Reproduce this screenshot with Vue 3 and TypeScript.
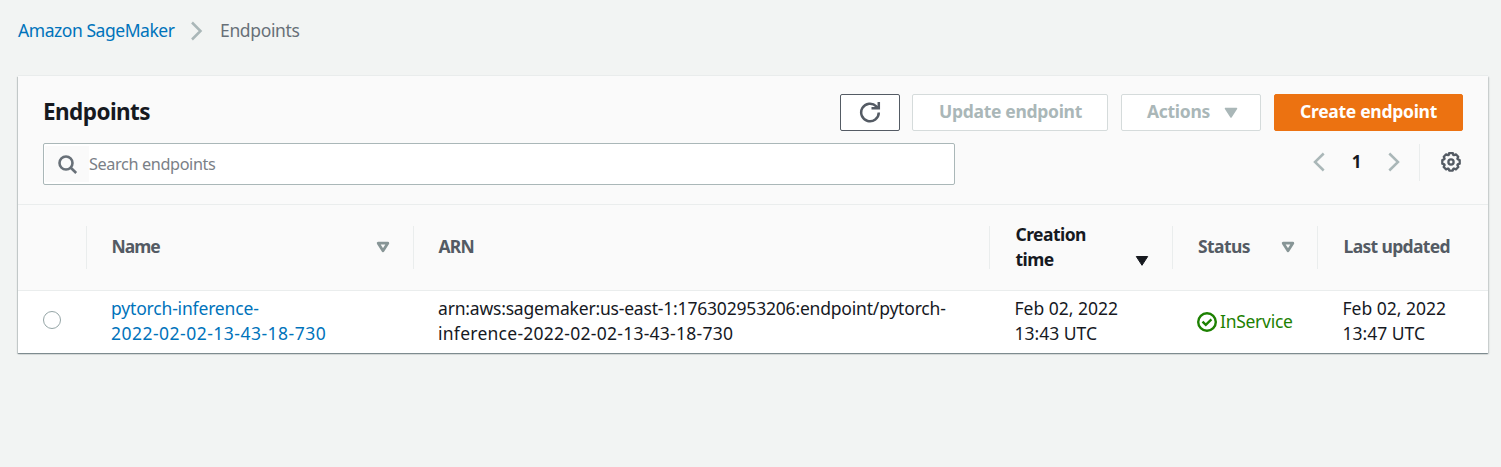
<script setup lang="ts">
interface Column {
  key: string
  lines: string[]
  sort?: 'none' | 'desc'
}

const columns: Column[] = [
  { key: 'name', lines: ['Name'], sort: 'none' },
  { key: 'arn', lines: ['ARN'] },
  { key: 'created', lines: ['Creation', 'time'], sort: 'desc' },
  { key: 'status', lines: ['Status'], sort: 'none' },
  { key: 'updated', lines: ['Last updated'] },
]
</script>

<template>
  <div class="page">
    <nav class="crumbs">
      <a class="link crumb-root">Amazon SageMaker</a>
      <svg class="crumb-sep" width="14" height="20" viewBox="0 0 14 20"><path d="M2 1.500 10.500 10 2 18.500" /></svg>
      <span class="crumb-here">Endpoints</span>
    </nav>

    <section class="card">
      <header class="head">
        <div class="title-row">
          <h2>Endpoints</h2>
          <div class="buttons">
            <button class="btn refresh" aria-label="Refresh">
              <svg width="22" height="22" viewBox="0 0 22 22">
                <path d="M19.800 11.500a8.800 8.800 0 1 1-2.500-6.200L19 7" />
                <path d="M19.800 1v6.200h-7.300" />
              </svg>
            </button>
            <button class="btn disabled update"><span>Update endpoint</span></button>
            <button class="btn disabled actions">
              <span>Actions</span>
              <svg width="14" height="12" viewBox="0 0 14 12"><path d="M1.500 1.500h11L7 10z" /></svg>
            </button>
            <button class="btn primary"><span>Create endpoint</span></button>
          </div>
        </div>
        <div class="filter-row">
          <div class="search">
            <div class="search-icon">
              <svg width="20" height="20" viewBox="0 0 20 20"><circle cx="8" cy="8" r="6.500" /><path d="m12.800 12.800 5.400 5.200" /></svg>
            </div>
            <div class="search-field"><span>Search endpoints</span></div>
          </div>
          <div class="pager">
            <svg class="arrow" width="12" height="20" viewBox="0 0 12 20"><path d="M10.700 1.500 2 10l8.700 8.500" /></svg>
            <b>1</b>
            <svg class="arrow" width="12" height="20" viewBox="0 0 12 20"><path d="M1.300 1.500 10 10l-8.700 8.500" /></svg>
            <i class="rule"></i>
            <svg class="gear" width="20" height="20" viewBox="0 0 20 20">
              <path d="M8.300 1h3.400l.7 2 .5.200 2-.9 2.300 2.400-.8 1.900.3.700 2 .8v3.600l-2 .7-.3.600.9 2-2.400 2.400-2-.9-.5.200-.7 2H8.300l-.7-2-.5-.2-2 .9L2.700 15l.9-2-.3-.600-2-.7V8.100l2-.8.300-.7-.8-1.900 2.300-2.400 2 .9.500-.2z" />
              <circle cx="10" cy="10" r="2.600" />
            </svg>
          </div>
        </div>
      </header>

      <div class="grid thead">
        <div class="th"></div>
        <div v-for="c in columns" :key="c.key" class="th" :class="[c.key, { sorted: c.sort === 'desc' }]">
          <div class="label">
            <div v-for="l in c.lines" :key="l"><span>{{ l }}</span></div>
          </div>
          <svg v-if="c.sort" class="sort" width="14" height="12" viewBox="0 0 14 12">
            <path v-if="c.sort === 'none'" class="hollow" d="M2.200 2.200h9.600L7 9.800z" />
            <path v-else class="solid" d="M1.300 1.500h11.400L7 10.300z" />
          </svg>
        </div>
      </div>

      <div class="grid row">
        <div class="td pick"><span class="radio"></span></div>
        <div class="td link"><div class="n1">pytorch-inference-</div><div class="n2">2022-02-02-13-43-18-730</div></div>
        <div class="td"><div class="a1">arn:aws:sagemaker:us-east-1:176302953206:endpoint/pytorch-</div><div class="a2">inference-2022-02-02-13-43-18-730</div></div>
        <div class="td date"><div>Feb 02, 2022</div><div>13:43 UTC</div></div>
        <div class="td ok">
          <svg width="20" height="20" viewBox="0 0 20 20"><circle cx="10" cy="10" r="8.800" /><path d="m5.500 9.600 3.300 3.200 5.600-5.400" /></svg>
          <span>InService</span>
        </div>
        <div class="td date"><div>Feb 02, 2022</div><div>13:47 UTC</div></div>
      </div>
    </section>
  </div>
</template>

<style>
body { background: #f2f4f3; }
</style>

<style scoped>
.page {
  box-sizing: border-box;
  height: 467px;
  padding: 0 13px 0 18px;
  background: #f2f4f3;
  color: #16191f;
  font: 17.5px/25px "Noto Sans", "Open Sans", sans-serif;
  white-space: nowrap;
  overflow: hidden;
}
svg { display: block; flex: none; fill: none; }
.link { color: #0073bb; }
.crumbs { display: flex; align-items: center; height: 62px; }
.crumb-root, .crumb-here { padding-bottom: 2px; }
.crumb-root { width: 156px; letter-spacing: -0.45px; }
.crumb-sep { margin: 0 15px 0 16px; stroke: #aab7b8; stroke-width: 2.5; }
.crumb-here { color: #687078; margin-left: 1px; letter-spacing: -0.35px; }
.card {
  margin-top: 14px;
  width: 1470px;
  background: #fff;
  box-shadow: 0 1px 1px 0 rgba(0, 28, 36, .3), 1px 1px 1.500px 0 rgba(0, 28, 36, .17), -1px 1px 1px 0 rgba(0, 28, 36, .15), 0 -1px 0 0 #eaeded;
}
.head {
  box-sizing: border-box;
  height: 129px;
  padding: 18px 25px 0;
  background: #fafafa;
  border-bottom: 1px solid #eaeded;
}
.title-row { display: flex; justify-content: space-between; height: 37px; }
h2 { margin: 0; font-size: 22.5px; line-height: 36px; font-weight: 700; letter-spacing: -0.57px; }
.buttons { display: flex; }
.btn {
  box-sizing: border-box;
  display: flex;
  align-items: center;
  justify-content: center;
  height: 37px;
  padding: 0;
  border: 1px solid #545b64;
  border-radius: 2px;
  background: #fff;
  font: inherit;
  font-weight: 700;
}
.btn span { padding-bottom: 2px; }
.refresh { width: 60px; margin-right: 12px; }
.refresh svg { margin-bottom: 2px; stroke: #545b64; stroke-width: 2.500; }
.disabled { border-color: #d5dbdb; color: #aab7b8; }
.update { width: 196px; margin-right: 13px; padding-left: 1px; letter-spacing: -0.31px; }
.actions { width: 140px; margin-right: 13px; padding-left: 3px; gap: 14px; letter-spacing: -0.3px; }
.actions svg { fill: #aab7b8; stroke: #aab7b8; stroke-width: 1.500; stroke-linejoin: round; }
.primary { width: 189px; border-color: #ec7211; background: #ec7211; color: #fff; letter-spacing: -0.29px; }
.filter-row { display: flex; justify-content: space-between; margin-top: 12px; }
.search {
  box-sizing: border-box;
  display: flex;
  width: 912px;
  height: 42px;
  padding: 2px 1px;
  border: 1px solid #aab7b8;
  border-radius: 2px;
  background: #fff;
}
.search-icon { width: 44px; display: flex; align-items: center; background: #fafafa; }
.search-icon svg { margin: 2px 0 0 13px; stroke: #687078; stroke-width: 2.600; }
.search-field { line-height: 37px; font-size: 16.25px; color: #7a8087; letter-spacing: -0.38px; }
.pager { display: flex; align-items: center; height: 38px; }
.arrow { stroke: #aab7b8; stroke-width: 2.500; }
.pager b { width: 63px; text-align: center; font-size: 17px; padding-bottom: 1px; }
.rule { width: 1px; height: 37px; margin: 0 21px 0 19px; background: #eaeded; }
.gear { margin-right: 2px; stroke: #545b64; stroke-width: 2.300; stroke-linejoin: round; }
.grid { display: grid; grid-template-columns: 68px 327px 576px 183px 145px 171px; }
.thead { height: 85px; align-items: center; background: #fafafa; border-bottom: 1px solid #eaeded; color: #545b64; font-weight: 700; }
.th { display: flex; align-items: center; box-sizing: border-box; height: 43px; padding: 0 23px 0 25px; }
.th + .th { border-left: 1px solid #eaeded; }
.label { flex: 1; padding-bottom: 2px; letter-spacing: -0.55px; }
.name .label { letter-spacing: -1px; margin-left: -0.5px; }
.arn .label { letter-spacing: -0.8px; margin-left: -0.5px; }
.created .label { margin-left: 0.5px; }
.updated .label { margin-left: 0.5px; letter-spacing: -0.65px; }
.status .label { letter-spacing: -0.6px; }
.status { padding-right: 22px; }
.sort { margin-top: -1px; }
.sorted { color: #16191f; }
.sorted .sort { align-self: flex-end; margin: 0 0 2.5px; }
.hollow { stroke: #879596; stroke-width: 2.800; stroke-linejoin: round; }
.solid { fill: #16191f; stroke: #16191f; stroke-linejoin: round; }
.row { height: 62px; }
.td { padding: 5px 0 0 25px; }
.n1 { letter-spacing: -0.17px; }
.n2 { letter-spacing: 0.49px; }
.a1 { letter-spacing: -0.19px; }
.a2 { letter-spacing: 0.26px; }
.date { padding-left: 25.5px; }
.pick { padding-top: 20px; }
.radio { display: block; box-sizing: border-box; width: 18px; height: 18px; border: 1px solid #95a5a6; border-radius: 50%; }
.ok { display: flex; align-items: center; gap: 3px; padding-top: 0; color: #1d8102; letter-spacing: -0.28px; }
.ok span { padding-bottom: 1px; }
.ok svg { stroke: #1d8102; stroke-width: 2.400; }
</style>
